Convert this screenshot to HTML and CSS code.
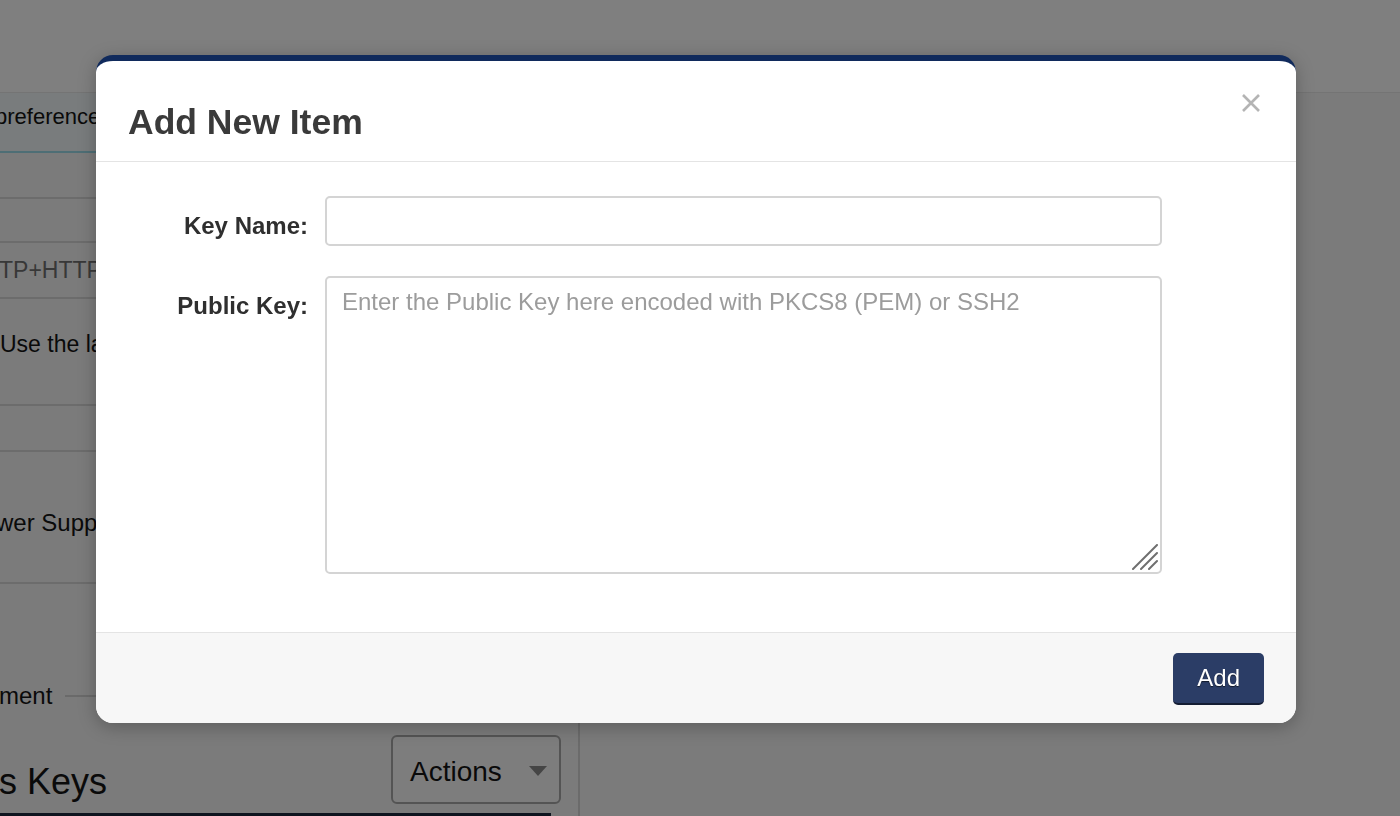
FILE: index.html
```html
<!DOCTYPE html>
<html lang="en">
<head>
<meta charset="utf-8">
<title>Add New Item</title>
<link rel="stylesheet" href="styles.css">
</head>
<body>
<div class="page">
  <header class="topbar"></header>
  <div class="main">
    <aside class="sidebar">
      <div class="tab"><span class="tab-text">preferences</span></div>
      <div class="row row-a"></div>
      <div class="row row-b"></div>
      <div class="row row-c"><span class="muted">TP+HTTPS</span></div>
      <div class="row row-d"><span>Use the latest settings</span></div>
      <div class="row row-e"></div>
      <div class="row row-f"><span class="cut">wer Supply</span></div>
      <div class="legend"><span class="legend-text">ment</span><span class="legend-line"></span></div>
      <div class="section-head">
        <h2 class="section-title">s Keys</h2>
        <button class="actions" type="button">Actions <span class="caret"></span></button>
      </div>
      <div class="table-head"></div>
    </aside>
    <div class="content"></div>
  </div>
</div>

<div class="overlay"></div>

<div class="modal">
  <div class="modal-header">
    <h1 class="modal-title">Add New Item</h1>
    <button class="close" type="button" aria-label="Close">
      <svg width="20" height="20" viewBox="0 0 20 20"><path d="M2 2 L18 18 M18 2 L2 18" stroke="#b4b4b4" stroke-width="2.6" fill="none"/></svg>
    </button>
  </div>
  <div class="modal-body">
    <form class="form-grid">
      <label class="form-label" for="keyname">Key Name:</label>
      <input class="form-input" id="keyname" type="text">
      <label class="form-label" for="pubkey">Public Key:</label>
      <div class="textarea-wrap">
        <textarea class="form-textarea" id="pubkey" placeholder="Enter the Public Key here encoded with PKCS8 (PEM) or SSH2"></textarea>
        <svg class="grip" width="26" height="26" viewBox="0 0 26 26" aria-hidden="true">
          <path d="M1 25 L25 1 M9 25 L25 9 M17 25 L25 17" stroke="#6f6f6f" stroke-width="2" stroke-linecap="round" fill="none"/>
        </svg>
      </div>
    </form>
  </div>
  <div class="modal-footer">
    <button class="btn-add" type="button">Add</button>
  </div>
</div>
</body>
</html>
```
FILE: styles.css
```css
* { box-sizing: border-box; }
html, body { margin: 0; padding: 0; }
body {
  width: 1400px;
  height: 816px;
  overflow: hidden;
  font-family: "Liberation Sans", Arial, Helvetica, sans-serif;
  background: #f6f6f6;
  color: #141414;
}
.page { display: flex; flex-direction: column; height: 816px; }
.topbar {
  height: 93px;
  background: #ffffff;
  border-bottom: 1px solid #e8e8e8;
  flex: none;
}
.main { display: flex; flex: 1; }
.sidebar {
  width: 580px;
  border-right: 2px solid #d6d6d6;
  display: flex;
  flex-direction: column;
  font-size: 24px;
  padding-right: 17px;
}
.tab {
  height: 60px;
  background: #f3f8fa;
  border-bottom: 2px solid #9cdcea;
  display: flex;
  align-items: center;
  margin-right: -17px;
  padding-bottom: 10px;
}
.tab-text { margin-left: -5px; font-size: 22px; }
.row { border-bottom: 2px solid #d8d8d8; margin-right: -17px; }
.row-a { height: 46px; }
.row-b { height: 44px; }
.row-c { height: 56px; display: flex; align-items: center; font-size: 23px; }
.row-c .muted { color: #707070; margin-left: -1px; }
.row-d { height: 107px; padding-top: 32px; font-size: 23px; }
.row-e { height: 46px; }
.row-f { height: 132px; padding-top: 57px; }
.cut { margin-left: -4px; }
.legend {
  margin-top: 99px;
  display: flex;
  align-items: center;
  height: 26px;
}
.legend-text { margin-left: -1px; }
.legend-line { flex: 1; height: 2px; background: #d4d4d4; margin-left: 13px; }
.section-head {
  margin-top: 26px;
  display: flex;
  justify-content: space-between;
  align-items: flex-end;
}
.section-title {
  margin: 0 0 1px -1px;
  font-size: 36px;
  line-height: 42px;
  font-weight: normal;
}
.actions {
  width: 170px;
  height: 69px;
  border: 2px solid #a8a8a8;
  border-radius: 6px;
  background: #fbfbfb;
  font-family: inherit;
  font-size: 28px;
  color: #141414;
  text-align: left;
  padding: 5px 0 0 17px;
  display: flex;
  align-items: center;
}
.caret {
  width: 0;
  height: 0;
  border-left: 9px solid transparent;
  border-right: 9px solid transparent;
  border-top: 10px solid #8a8a8a;
  margin-left: 27px;
  margin-top: -3px;
}
.table-head {
  margin-top: 9px;
  margin-right: 10px;
  height: 20px;
  background: #1d283f;
}
.content { flex: 1; }

.overlay {
  position: fixed;
  inset: 0;
  background: rgba(0, 0, 0, 0.5);
}

.modal {
  position: absolute;
  top: 55px;
  left: 96px;
  width: 1200px;
  background: #ffffff;
  border-top: 6px solid #102a5c;
  border-radius: 17px;
  overflow: hidden;
  box-shadow: 0 4px 18px rgba(0, 0, 0, 0.25);
}
.modal-header {
  position: relative;
  height: 101px;
  padding: 42px 32px 0;
  border-bottom: 1px solid #e4e4e4;
}
.modal-title {
  margin: 0;
  font-size: 35.5px;
  line-height: 38px;
  font-weight: bold;
  color: #3a3a3a;
}
.close {
  position: absolute;
  top: 32px;
  right: 35px;
  width: 20px;
  height: 20px;
  padding: 0;
  border: 0;
  background: none;
  display: flex;
}
.modal-body { padding: 34px 0 58px; }
.form-grid {
  display: grid;
  grid-template-columns: 212px 837px;
  column-gap: 17px;
  row-gap: 30px;
  margin: 0;
}
.form-label {
  text-align: right;
  font-size: 24px;
  line-height: 28px;
  font-weight: bold;
  color: #2f2f2f;
  padding-top: 16px;
}
.form-input, .form-textarea {
  border: 2px solid #d4d4d4;
  border-radius: 5px;
  font-family: inherit;
  font-size: 24px;
  color: #333;
  background: #fff;
  margin: 0;
  outline: none;
}
.form-input { height: 50px; padding: 0 15px; }
.textarea-wrap { position: relative; height: 298px; }
.form-textarea {
  display: block;
  width: 100%;
  height: 298px;
  padding: 10px 15px;
  line-height: 28px;
  resize: none;
}
.form-textarea::placeholder { color: #9c9c9c; }
.grip {
  position: absolute;
  right: 4px;
  bottom: 4px;
}
.modal-footer {
  background: #f7f7f7;
  border-top: 1px solid #e4e4e4;
  padding: 20px 32px 18px;
  display: flex;
  justify-content: flex-end;
}
.btn-add {
  height: 52px;
  padding: 0 24px;
  background: #2b3d66;
  color: #ffffff;
  border: 0;
  border-bottom: 2px solid #141d33;
  border-radius: 5px;
  font-family: inherit;
  font-size: 24px;
  text-shadow: 0 1px 1px rgba(0, 0, 0, 0.6);
}
```
